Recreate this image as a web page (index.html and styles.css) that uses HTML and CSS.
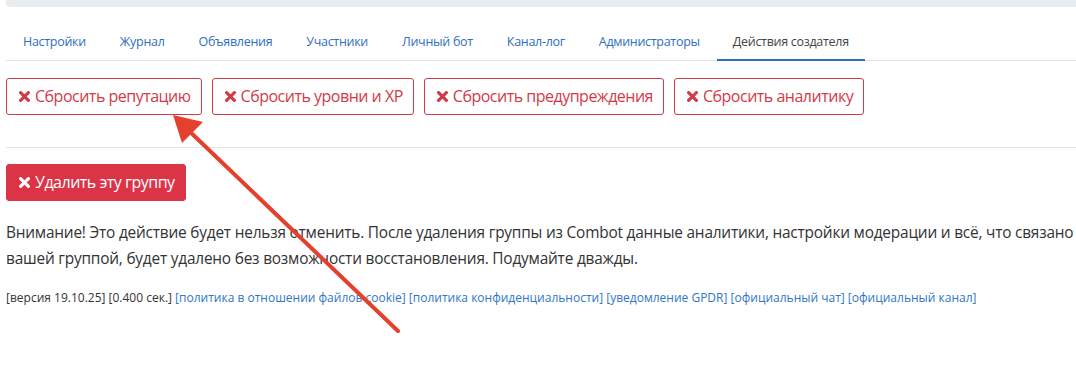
FILE: index.html
```html
<!DOCTYPE html>
<html lang="ru">
<head>
<meta charset="utf-8">
<link rel="stylesheet" href="styles.css">
</head>
<body>
<div class="page">
  <div class="topbar"></div>
  <nav class="tabs">
    <a class="tab">Настройки</a>
    <a class="tab">Журнал</a>
    <a class="tab">Объявления</a>
    <a class="tab">Участники</a>
    <a class="tab">Личный бот</a>
    <a class="tab">Канал-лог</a>
    <a class="tab">Администраторы</a>
    <a class="tab active">Действия создателя</a>
  </nav>
  <div class="actions">
    <button class="btn btn-outline"><svg class="x" viewBox="0 0 10 10"><path d="M1.5 1.5L8.5 8.5M8.5 1.5L1.5 8.5"/></svg>Сбросить репутацию</button>
    <button class="btn btn-outline"><svg class="x" viewBox="0 0 10 10"><path d="M1.5 1.5L8.5 8.5M8.5 1.5L1.5 8.5"/></svg>Сбросить уровни и XP</button>
    <button class="btn btn-outline"><svg class="x" viewBox="0 0 10 10"><path d="M1.5 1.5L8.5 8.5M8.5 1.5L1.5 8.5"/></svg>Сбросить предупреждения</button>
    <button class="btn btn-outline"><svg class="x" viewBox="0 0 10 10"><path d="M1.5 1.5L8.5 8.5M8.5 1.5L1.5 8.5"/></svg>Сбросить аналитику</button>
  </div>
  <hr class="sep">
  <button class="btn btn-danger"><svg class="x" viewBox="0 0 10 10"><path d="M1.5 1.5L8.5 8.5M8.5 1.5L1.5 8.5"/></svg>Удалить эту группу</button>
  <p class="warning">Внимание! Это действие будет нельзя отменить. После удаления группы из Combot данные аналитики, настройки модерации и всё, что связано<br>вашей группой, будет удалено без возможности восстановления. Подумайте дважды.</p>
  <footer class="footer">
    <span>[версия 19.10.25]</span> <span>[0.400 сек.]</span>
    <a>[политика в отношении файлов cookie]</a>
    <a>[политика конфиденциальности]</a>
    <a>[уведомление GPDR]</a>
    <a>[официальный чат]</a>
    <a>[официальный канал]</a>
  </footer>
</div>
<svg class="arrow" width="1076" height="365" viewBox="0 0 1076 365">
  <line x1="398" y1="331" x2="186" y2="128" />
  <polygon points="173,115 203,122 182,143" />
</svg>
</body>
</html>
```

FILE: styles.css
```css
html, body {
  margin: 0;
  padding: 0;
  overflow: hidden;
  background: #fff;
}
body {
  font-family: "Open Sans", "Noto Sans", sans-serif;
  color: #333;
  position: relative;
  width: 1076px;
  height: 365px;
}
.page {
  padding-left: 6px;
  white-space: nowrap;
}
.topbar {
  height: 7px;
  background: #e9ecef;
  border-bottom-left-radius: 4px;
}
.tabs {
  display: flex;
  margin-top: 17px;
  border-bottom: 1px solid #dee2e6;
}
.tab {
  font-size: 12.5px;
  letter-spacing: -0.3px;
  line-height: 20px;
  padding: 8px 17px 7px;
  color: #2f6fbf;
  border-bottom: 2px solid transparent;
  margin-bottom: -1px;
}
.tab.active {
  color: #454545;
  border-bottom-color: #2f6fbf;
  padding-left: 16px;
  padding-right: 16px;
}
.actions {
  display: flex;
  gap: 10px;
  margin-top: 17px;
}
.btn {
  display: inline-flex;
  align-items: center;
  gap: 5px;
  font-family: "Open Sans", "Noto Sans", sans-serif;
  font-size: 16px;
  letter-spacing: -0.5px;
  line-height: 23px;
  padding: 6px 10px 6px 12px;
  border-radius: 3px;
  border: 1px solid #d23a4a;
  background: #fff;
  color: #d23a4a;
}
.x {
  width: 11px;
  height: 11px;
  fill: none;
  stroke: currentColor;
  stroke-width: 2.8;
  stroke-linecap: square;
}
.btn-danger {
  background: #dc3447;
  border-color: #dc3447;
  color: #fff;
  padding-right: 10px;
}
.sep {
  border: 0;
  border-top: 1px solid #e4e4e4;
  margin: 32px 0 16px;
}
.warning {
  font-size: 15.4px;
  letter-spacing: -0.2px;
  line-height: 26px;
  margin: 19px 0 0;
  color: #333;
}
.footer {
  font-size: 12px;
  line-height: 18px;
  margin-top: 17px;
  color: #333;
}
.footer a {
  color: #2f75c9;
}
.arrow {
  position: absolute;
  left: 0;
  top: 0;
  pointer-events: none;
}
.arrow line {
  stroke: #e5402e;
  stroke-width: 4;
  stroke-linecap: round;
}
.arrow polygon {
  fill: #e5402e;
}
```
